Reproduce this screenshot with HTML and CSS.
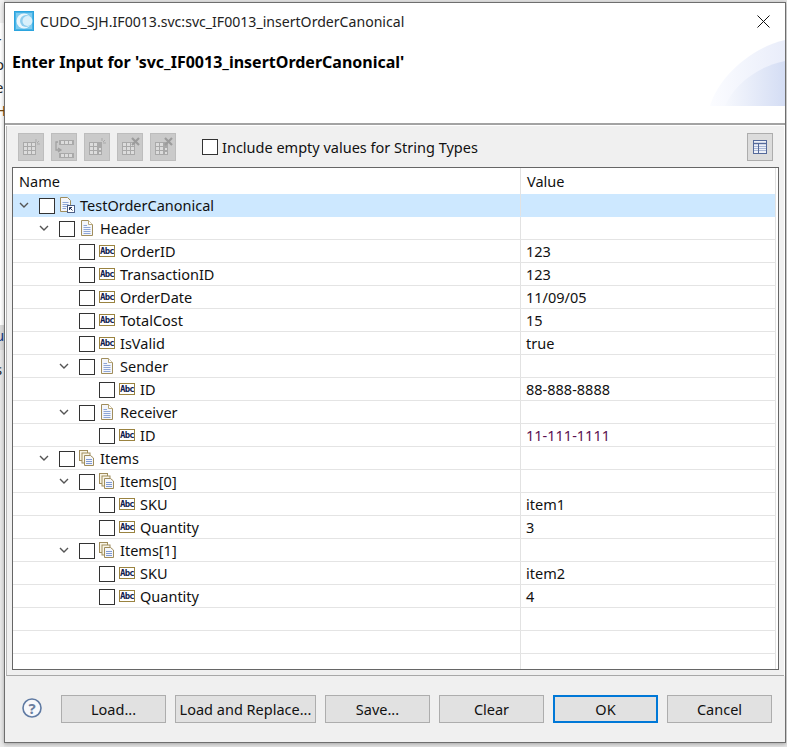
FILE: index.html
```html
<!DOCTYPE html>
<html lang="en">
<head>
    <meta charset="UTF-8">
    <title>Enter Input</title>
    <link rel="stylesheet" href="styles.css">
</head>
<body>
    <svg class="defs" width="0" height="0">
        <symbol id="twisty" viewBox="0 0 10 6">
            <path d="M1 1 L5 5 L9 1" fill="none" stroke="#555" stroke-width="1.4"/>
        </symbol>
        <symbol id="doc" viewBox="0 0 16 16">
            <path d="M2.5 .5 H9.5 L13.5 4.5 V15.5 H2.5 Z" fill="#f4f6fb" stroke="#a08d5c"/>
            <path d="M9.5 .5 V4.5 H13.5" fill="#fff" stroke="#b9a878"/>
            <path d="M4.5 5.5 H8 M4.5 7.5 H11.5 M4.5 9.5 H11.5 M4.5 11.5 H11.5 M4.5 13.5 H11.5" stroke="#8ea6d6"/>
        </symbol>
        <symbol id="docref" viewBox="0 0 16 16">
            <path d="M1.5 .5 H8.5 L11.5 3.5 V14.5 H1.5 Z" fill="#f4f6fb" stroke="#a08d5c"/>
            <path d="M3.5 5.5 H9.5 M3.5 7.5 H9.5 M3.5 9.5 H9.5 M3.5 11.5 H7" stroke="#8ea6d6"/>
            <rect x="8.5" y="8.5" width="7" height="7" fill="#fff" stroke="#4c5f86"/>
            <path d="M10.5 10.5 L13.5 13.5 M10.5 10.5 H13 M10.5 10.5 V13" stroke="#2b3a5e"/>
        </symbol>
        <symbol id="docs" viewBox="0 0 16 16">
            <rect x=".5" y=".5" width="8" height="10" fill="#f8f4e6" stroke="#a08d5c"/>
            <rect x="3" y="3" width="8" height="10" fill="#f8f4e6" stroke="#a08d5c"/>
            <path d="M5.5 5.5 H11.5 L14.5 8 V15.5 H5.5 Z" fill="#f4f6fb" stroke="#a08d5c"/>
            <path d="M7 9.5 H13 M7 11.5 H13 M7 13.5 H13" stroke="#7f9ad2"/>
        </symbol>
        <symbol id="grid" viewBox="0 0 13 13">
            <rect width="13" height="13" fill="#a9a9a9"/>
            <path d="M1 1 h3 v3 h-3 Z M5 1 h3 v3 h-3 Z M9 1 h3 v3 h-3 Z M1 5 h3 v3 h-3 Z M5 5 h3 v3 h-3 Z M9 5 h3 v3 h-3 Z M1 9 h3 v3 h-3 Z M5 9 h3 v3 h-3 Z M9 9 h3 v3 h-3 Z" fill="#dcdcdc"/>
        </symbol>
    </svg>

    <div class="backdrop">
        <div class="strip strip-top"></div>
        <div class="strip strip-mid"></div>
        <div class="strip strip-low"></div>
        <span class="peek peek-1">r</span>
        <span class="peek peek-2">o</span>
        <span class="peek peek-3">e</span>
        <span class="peek peek-4">H</span>
        <span class="peek peek-5">u</span>
        <span class="peek peek-6">s</span>
    </div>

    <div class="window">
        <div class="header">
            <div class="titlebar">
                <svg class="app-icon" width="20" height="20" viewBox="0 0 20 20">
                    <rect x=".5" y=".5" width="19" height="19" fill="#cfeaf8" stroke="#2ba4de"/>
                    <rect x="1.5" y="1.5" width="17" height="17" fill="#7fcbef" stroke="#45b2e6"/>
                    <circle cx="10" cy="10" r="7.5" fill="#eaf6fc"/>
                    <circle cx="12" cy="10" r="6" fill="#8ecdee"/>
                    <circle cx="13.5" cy="10" r="5" fill="#d9f0fb"/>
                </svg>
                <span class="title">CUDO_SJH.IF0013.svc:svc_IF0013_insertOrderCanonical</span>
                <svg class="close" width="13" height="13" viewBox="0 0 13 13">
                    <path d="M.5 .5 L12.5 12.5 M12.5 .5 L.5 12.5" stroke="#111" stroke-width="1"/>
                </svg>
            </div>
            <h1 class="heading">Enter Input for 'svc_IF0013_insertOrderCanonical'</h1>
            <svg class="banner" width="75" height="66" viewBox="0 0 75 66">
                <defs>
                    <linearGradient id="fade" x1="0" x2="1" y1="0" y2="0">
                        <stop offset="0" stop-color="#fbfcff"/>
                        <stop offset="1" stop-color="#e9edfa"/>
                    </linearGradient>
                    <linearGradient id="fade2" x1="0" x2="1" y1="0" y2="0">
                        <stop offset="0" stop-color="#f6f8fd"/>
                        <stop offset="1" stop-color="#d4ddf4"/>
                    </linearGradient>
                </defs>
                <path d="M0 66 C8 38 40 8 75 0 V66 Z" fill="url(#fade)"/>
                <path d="M15 66 C24 45 46 27 75 21 V66 Z" fill="url(#fade2)"/>
            </svg>
        </div>

        <div class="panel">
            <div class="toolbar">
                <span class="tool">
                    <svg width="26" height="28" viewBox="0 0 26 28">
                        <use href="#grid" x="5" y="9" width="13" height="13"/>
                        <path d="M18 6 v3 M21 8 l-2 2 M22 11 h-3" stroke="#a9a9a9"/>
                    </svg>
                </span>
                <span class="tool">
                    <svg width="26" height="28" viewBox="0 0 26 28">
                        <path d="M8 7 h15 v5 h-15 Z M8 20 h15 v5 h-15 Z" fill="#a9a9a9"/>
                        <path d="M10 8 h3 v3 h-3 Z M14 8 h3 v3 h-3 Z M18 8 h3 v3 h-3 Z M10 21 h3 v3 h-3 Z M14 21 h3 v3 h-3 Z M18 21 h3 v3 h-3 Z" fill="#dcdcdc"/>
                        <path d="M7 9 H5 V17 H10 M7 15 L10 17 L7 19" fill="none" stroke="#a0a0a0" stroke-width="1.3"/>
                    </svg>
                </span>
                <span class="tool">
                    <svg width="26" height="28" viewBox="0 0 26 28">
                        <use href="#grid" x="5" y="9" width="13" height="13"/>
                        <path d="M14 9 h4 v13 h-4 Z" fill="#a9a9a9"/>
                        <path d="M15 15 h2 v2 h-2 Z M15 19 h2 v2 h-2 Z" fill="#dcdcdc"/>
                        <path d="M18 5 v3 M21 7 l-2 2 M22 10 h-3" stroke="#a9a9a9"/>
                    </svg>
                </span>
                <span class="tool">
                    <svg width="26" height="28" viewBox="0 0 26 28">
                        <use href="#grid" x="5" y="9" width="13" height="13"/>
                        <path d="M15 5 L22 12 M22 5 L15 12" stroke="#9c9c9c" stroke-width="2.2"/>
                    </svg>
                </span>
                <span class="tool">
                    <svg width="26" height="28" viewBox="0 0 26 28">
                        <use href="#grid" x="5" y="9" width="13" height="13"/>
                        <path d="M14 9 h4 v13 h-4 Z" fill="#a9a9a9"/>
                        <path d="M15 15 h2 v2 h-2 Z M15 19 h2 v2 h-2 Z" fill="#dcdcdc"/>
                        <path d="M15 5 L22 12 M22 5 L15 12" stroke="#9c9c9c" stroke-width="2.2"/>
                    </svg>
                </span>
                <label class="include">
                    <span class="check"></span>
                    Include empty values for String Types
                </label>
                <span class="tool tool-layout">
                    <svg width="26" height="28" viewBox="0 0 26 28">
                        <rect x="6.5" y="7.5" width="13" height="13" fill="#eef1f8" stroke="#54699a"/>
                        <path d="M7 10.5 H19" stroke="#54699a" stroke-width="1.4"/>
                        <path d="M7 13.5 H19 M7 15.5 H19 M7 17.5 H19" stroke="#a9b7d6"/>
                        <path d="M11.5 10 V20" stroke="#54699a"/>
                    </svg>
                </span>
            </div>

            <div class="tree">
                <div class="tree-head">
                    <div class="col-name">Name</div>
                    <div class="col-value">Value</div>
                </div>

                <div class="row selected">
                    <div class="col-name lvl-0"><svg class="twisty"><use href="#twisty"/></svg><span class="check"></span><svg class="icon"><use href="#docref"/></svg>TestOrderCanonical</div>
                    <div class="col-value"></div>
                </div>
                <div class="row">
                    <div class="col-name lvl-1"><svg class="twisty"><use href="#twisty"/></svg><span class="check"></span><svg class="icon"><use href="#doc"/></svg>Header</div>
                    <div class="col-value"></div>
                </div>
                <div class="row">
                    <div class="col-name lvl-2"><span class="no-twisty"></span><span class="check"></span><span class="abc">Abc</span>OrderID</div>
                    <div class="col-value">123</div>
                </div>
                <div class="row">
                    <div class="col-name lvl-2"><span class="no-twisty"></span><span class="check"></span><span class="abc">Abc</span>TransactionID</div>
                    <div class="col-value">123</div>
                </div>
                <div class="row">
                    <div class="col-name lvl-2"><span class="no-twisty"></span><span class="check"></span><span class="abc">Abc</span>OrderDate</div>
                    <div class="col-value">11/09/05</div>
                </div>
                <div class="row">
                    <div class="col-name lvl-2"><span class="no-twisty"></span><span class="check"></span><span class="abc">Abc</span>TotalCost</div>
                    <div class="col-value">15</div>
                </div>
                <div class="row">
                    <div class="col-name lvl-2"><span class="no-twisty"></span><span class="check"></span><span class="abc">Abc</span>IsValid</div>
                    <div class="col-value">true</div>
                </div>
                <div class="row">
                    <div class="col-name lvl-2"><svg class="twisty"><use href="#twisty"/></svg><span class="check"></span><svg class="icon"><use href="#doc"/></svg>Sender</div>
                    <div class="col-value"></div>
                </div>
                <div class="row">
                    <div class="col-name lvl-3"><span class="no-twisty"></span><span class="check"></span><span class="abc">Abc</span>ID</div>
                    <div class="col-value">88-888-8888</div>
                </div>
                <div class="row">
                    <div class="col-name lvl-2"><svg class="twisty"><use href="#twisty"/></svg><span class="check"></span><svg class="icon"><use href="#doc"/></svg>Receiver</div>
                    <div class="col-value"></div>
                </div>
                <div class="row">
                    <div class="col-name lvl-3"><span class="no-twisty"></span><span class="check"></span><span class="abc">Abc</span>ID</div>
                    <div class="col-value purple">11-111-1111</div>
                </div>
                <div class="row">
                    <div class="col-name lvl-1"><svg class="twisty"><use href="#twisty"/></svg><span class="check"></span><svg class="icon"><use href="#docs"/></svg>Items</div>
                    <div class="col-value"></div>
                </div>
                <div class="row">
                    <div class="col-name lvl-2"><svg class="twisty"><use href="#twisty"/></svg><span class="check"></span><svg class="icon"><use href="#docs"/></svg>Items[0]</div>
                    <div class="col-value"></div>
                </div>
                <div class="row">
                    <div class="col-name lvl-3"><span class="no-twisty"></span><span class="check"></span><span class="abc">Abc</span>SKU</div>
                    <div class="col-value">item1</div>
                </div>
                <div class="row">
                    <div class="col-name lvl-3"><span class="no-twisty"></span><span class="check"></span><span class="abc">Abc</span>Quantity</div>
                    <div class="col-value">3</div>
                </div>
                <div class="row">
                    <div class="col-name lvl-2"><svg class="twisty"><use href="#twisty"/></svg><span class="check"></span><svg class="icon"><use href="#docs"/></svg>Items[1]</div>
                    <div class="col-value"></div>
                </div>
                <div class="row">
                    <div class="col-name lvl-3"><span class="no-twisty"></span><span class="check"></span><span class="abc">Abc</span>SKU</div>
                    <div class="col-value">item2</div>
                </div>
                <div class="row">
                    <div class="col-name lvl-3"><span class="no-twisty"></span><span class="check"></span><span class="abc">Abc</span>Quantity</div>
                    <div class="col-value">4</div>
                </div>
                <div class="row"><div class="col-name"></div><div class="col-value"></div></div>
                <div class="row"><div class="col-name"></div><div class="col-value"></div></div>
                <div class="row row-rest"><div class="col-name"></div><div class="col-value"></div></div>
            </div>
        </div>

        <div class="footer">
            <svg class="help" width="20" height="20" viewBox="0 0 20 20">
                <circle cx="10" cy="10" r="9" fill="#f7f8fb" stroke="#5f7aa3" stroke-width="1.6"/>
                <text x="10" y="15.5" text-anchor="middle" class="help-mark">?</text>
            </svg>
            <button class="btn">Load...</button>
            <button class="btn btn-wide">Load and Replace...</button>
            <button class="btn">Save...</button>
            <button class="btn">Clear</button>
            <button class="btn btn-default">OK</button>
            <button class="btn">Cancel</button>
        </div>
    </div>
</body>
</html>
```

FILE: styles.css
```css
body {
    margin: 0;
    width: 787px;
    height: 747px;
    overflow: hidden;
    position: relative;
    background: #e4e4e4;
    font-family: "Noto Sans", "Open Sans", sans-serif;
    font-size: 14.5px;
    color: #111;
}
.defs {
    position: absolute;
}

/* bits of the IDE that show behind the dialog */
.backdrop {
    position: absolute;
    left: 0;
    top: 0;
    width: 4px;
    height: 747px;
    overflow: hidden;
    background: #fff;
}
.strip {
    position: absolute;
    left: 0;
    width: 4px;
    background: #dcdcdc;
}
.strip-top {
    top: 0;
    height: 23px;
    background: #f0f0f0;
}
.strip-mid {
    top: 325px;
    height: 25px;
}
.strip-low {
    top: 350px;
    height: 397px;
    background: #e9e9e9;
}
.peek {
    position: absolute;
    left: -5px;
    font-size: 15px;
    line-height: 18px;
    color: #2a2a2a;
}
.peek-1 { top: 32px; }
.peek-2 { top: 55px; }
.peek-3 { top: 78px; }
.peek-4 { top: 101px; color: #7a4a10; }
.peek-5 { top: 326px; color: #1b3f8a; }
.peek-6 { top: 360px; }

.window {
    position: absolute;
    left: 4px;
    top: 2px;
    width: 780px;
    height: 739px;
    border: 1px solid #6e6e6e;
    background: #fff;
    display: flex;
    flex-direction: column;
    box-shadow: 0 1px 4px rgba(0, 0, 0, .3);
}

.header {
    height: 120px;
    flex: none;
    position: relative;
    border-bottom: 2px solid #a3a3a3;
}
.titlebar {
    display: flex;
    align-items: center;
    height: 20px;
    padding: 8px 15px 0 9px;
}
.app-icon {
    margin-right: 6px;
}
.title {
    font-size: 14.1px;
    color: #222;
}
.close {
    margin-left: auto;
}
.heading {
    margin: 21px 0 0 7px;
    font-size: 16px;
    font-weight: bold;
    line-height: 20px;
    color: #000;
}
.banner {
    position: absolute;
    right: 0;
    bottom: 17px;
}

.panel {
    flex: 1;
    margin: 1px 1px 0 1px;
    padding: 7px 5px 5px 5px;
    background: #f0f0f0;
    border-left: 1px solid #b8b8b8;
    border-bottom: 1px solid #a8a8a8;
    box-sizing: border-box;
    display: flex;
    flex-direction: column;
    gap: 6px;
}

.toolbar {
    display: flex;
    align-items: center;
    gap: 7px;
    height: 28px;
    padding: 0 6px;
}
.tool {
    width: 24px;
    height: 26px;
    flex: none;
    background: #cacaca;
    border: 1px solid #bdbdbd;
    display: block;
}
.tool svg {
    display: block;
    margin: -1px;
}
.tool-layout {
    background: #dcdcdc;
    border-color: #adadad;
}
.include {
    display: flex;
    align-items: center;
    gap: 4px;
    margin-left: 19px;
    margin-right: auto;
}
.check {
    width: 14px;
    height: 14px;
    flex: none;
    background: #fff;
    border: 1px solid #333;
    display: inline-block;
}
.row .check {
    margin-top: 2px;
}

.tree {
    flex: 1;
    background: #fff;
    border: 1px solid #666;
    display: flex;
    flex-direction: column;
    overflow: hidden;
}
.tree-head {
    display: flex;
    height: 26px;
    flex: none;
    line-height: 26px;
    margin-right: 2px;
    border-right: 1px solid #e2e2e2;
}
.tree-head .col-name {
    padding-left: 6px;
}
.tree-head .col-value {
    padding-left: 6px;
}
.row {
    display: flex;
    height: 22px;
    flex: none;
    line-height: 22px;
    margin-right: 2px;
    border-bottom: 1px solid #e4e4e4;
    border-right: 1px solid #e2e2e2;
}
.row-rest {
    flex: 1;
    border-bottom: 0;
}
.selected {
    background: #cde8ff;
    border-bottom-color: #cde8ff;
}
.col-name {
    width: 508px;
    flex: none;
    box-sizing: border-box;
    display: flex;
    align-items: center;
    white-space: nowrap;
    border-right: 1px solid #e2e2e2;
}
.col-value {
    padding-left: 5px;
    flex: 1;
}
.purple {
    color: #5a0f50;
}
.lvl-0 { padding-left: 1px; }
.lvl-1 { padding-left: 21px; }
.lvl-2 { padding-left: 41px; }
.lvl-3 { padding-left: 61px; }

.twisty {
    width: 10px;
    height: 6px;
    flex: none;
    margin: 0 10px 0 5px;
}
.no-twisty {
    width: 25px;
    flex: none;
}
.icon {
    width: 16px;
    height: 16px;
    flex: none;
    margin: 0 5px 0 4px;
}
.abc {
    box-sizing: border-box;
    width: 16px;
    height: 12px;
    flex: none;
    margin: 0 5px 0 4px;
    border: 1px solid #9a8340;
    background: #fff;
    color: #101c50;
    font-family: "DejaVu Sans Mono", monospace;
    font-size: 9px;
    font-weight: bold;
    line-height: 10px;
    letter-spacing: -.8px;
    text-align: center;
    overflow: hidden;
}

.footer {
    height: 47px;
    flex: none;
    padding: 19px 0 0 17px;
    background: #f0f0f0;
    display: flex;
    align-items: flex-start;
    gap: 9px;
}
.help {
    margin: 3px 10px 0 0;
}
.help-mark {
    font-family: "Noto Sans", sans-serif;
    font-size: 15px;
    font-weight: bold;
    fill: #6b7f9f;
}
.btn {
    width: 105px;
    height: 28px;
    padding: 0;
    background: #e1e1e1;
    border: 1px solid #adadad;
    font-family: inherit;
    font-size: 14.5px;
    color: #111;
}
.btn-wide {
    width: 141px;
}
.btn-default {
    border: 2px solid #0078d7;
}
```
